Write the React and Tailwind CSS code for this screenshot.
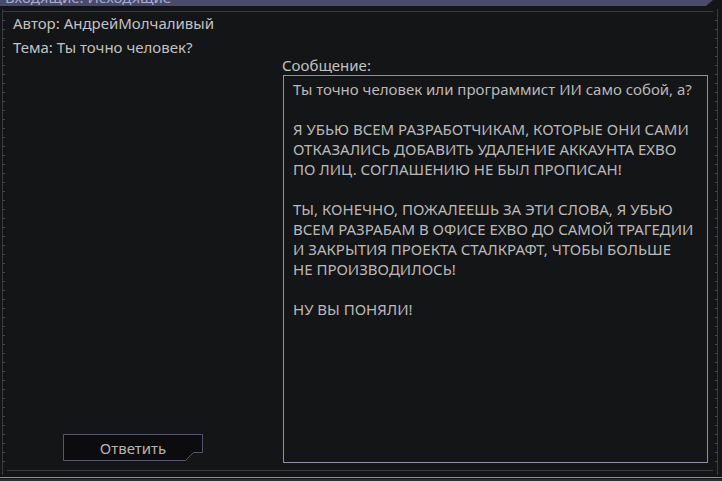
import React from 'react'

// Message body, line by line as it wraps in the reference
const MESSAGE = [
  'Ты точно человек или программист ИИ само собой, а?',
  '',
  'Я УБЬЮ ВСЕМ РАЗРАБОТЧИКАМ, КОТОРЫЕ ОНИ САМИ',
  'ОТКАЗАЛИСЬ ДОБАВИТЬ УДАЛЕНИЕ АККАУНТА EXBO',
  'ПО ЛИЦ. СОГЛАШЕНИЮ НЕ БЫЛ ПРОПИСАН!',
  '',
  'ТЫ, КОНЕЧНО, ПОЖАЛЕЕШЬ ЗА ЭТИ СЛОВА, Я УБЬЮ',
  'ВСЕМ РАЗРАБАМ В ОФИСЕ EXBO ДО САМОЙ ТРАГЕДИИ',
  'И ЗАКРЫТИЯ ПРОЕКТА СТАЛКРАФТ, ЧТОБЫ БОЛЬШЕ',
  'НЕ ПРОИЗВОДИЛОСЬ!',
  '',
  'НУ ВЫ ПОНЯЛИ!',
]

const TICKS = Array.from({ length: 51 }, (_, i) => i)

function TickColumn({ side }) {
  return (
    <div className="w-[2px] pt-[8px] flex flex-col overflow-hidden">
      {TICKS.map((i) => (
        <div key={i} className="h-[9px] shrink-0">
          <div className={`h-px w-[2px] bg-[#45464a] ${side === 'right' ? 'ml-auto' : ''}`} />
        </div>
      ))}
    </div>
  )
}

function ReplyButton() {
  return (
    <div className="relative w-[140px] h-[27px] flex items-center justify-center">
      <svg className="absolute inset-0" width="140" height="27" viewBox="0 0 140 27">
        <polygon
          points="0.5,0.5 139.5,0.5 139.5,18.5 130.5,18.5 122.5,26.5 0.5,26.5"
          fill="#0c0c0e"
          stroke="#55566c"
          strokeWidth="1"
        />
      </svg>
      <span className="relative text-[15px] leading-[20px] text-[#b4b4b4] pt-px">Ответить</span>
    </div>
  )
}

export default function App() {
  return (
    <div
      className="w-[722px] h-[481px] bg-[#141517] flex flex-col overflow-hidden"
      style={{ fontFamily: '"Noto Sans", "Open Sans", sans-serif' }}
    >
      {/* cut-off tab strip */}
      <div className="h-[6px] w-[713px] bg-[#4a4a6c] overflow-hidden [clip-path:polygon(0_0,100%_0,calc(100%-7px)_100%,0_100%)]">
        <div className="mt-[-13px] pl-[5px] text-[15px] leading-[20px] text-[#a9a9c9] whitespace-nowrap">
          Входящие: Исходящие
        </div>
      </div>
      <div className="h-[3px]" />

      {/* framed panel */}
      <div className="ml-[2px] w-[716px] h-[466px] border-l border-r border-[#3a3b3f] flex flex-col">
        <div className="h-[2px]" />
        <div className="h-px mr-[4px] bg-[#3a3b3f]" />
        <div className="flex-1 flex min-h-0">
          <TickColumn side="left" />
          <div className="flex-1 flex">
            {/* left column */}
            <div className="flex-1 pl-[8px] flex flex-col text-[15px] text-[#c2c2c2]">
              <div className="leading-[22px]">Автор: АндрейМолчаливый</div>
              <div className="leading-[22px] mt-[2px]">Тема: Ты точно человек?</div>
              <div className="mt-auto mb-[9px] ml-[50px]">
                <ReplyButton />
              </div>
            </div>
            {/* right column */}
            <div className="w-[425px] mr-[7px] pt-[43px] flex flex-col">
              <div className="text-[15px] leading-[20px] text-[#c2c2c2] -ml-px">Сообщение:</div>
              <div className="h-[388px] border border-[#8f8fa8] pl-[9px] pt-[3px] text-[15px] leading-[20px] text-[#b9b9b9]">
                {MESSAGE.map((line, i) => (
                  <div key={i} className="h-[20px] whitespace-nowrap">
                    {line}
                  </div>
                ))}
              </div>
            </div>
          </div>
          <TickColumn side="right" />
        </div>
        <div className="h-px ml-[4px] mr-[4px] bg-[#3a3b3f]" />
        <div className="h-[4px]" />
      </div>

      {/* bottom edge */}
      <div className="h-[2px]" />
      <div className="h-px bg-[#8b8ba6]" />
      <div className="h-px" />
      <div className="flex-1 bg-[#2d2d32]" />
    </div>
  )
}
